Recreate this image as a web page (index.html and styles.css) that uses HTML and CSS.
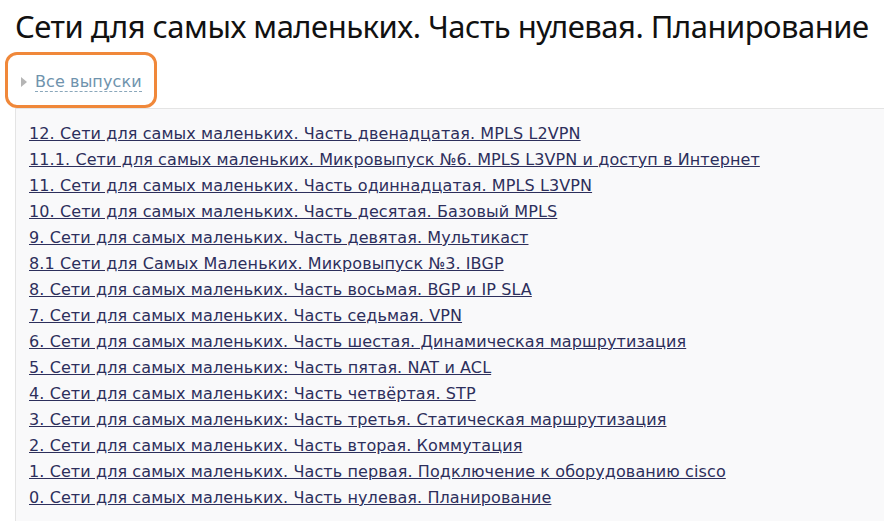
FILE: index.html
```html
<!DOCTYPE html>
<html lang="ru">

<head>
    <meta charset="UTF-8">
    <link rel="stylesheet" href="styles.css">
</head>

<body>
    <h1 class="post-title">Сети для самых маленьких. Часть нулевая. Планирование</h1>

    <!-- выделенный блок со ссылкой на все выпуски -->
    <div class="series-toggle">
        <span class="series-toggle__arrow"></span>
        <a href="#" class="series-toggle__link">Все выпуски</a>
    </div>

    <div class="series-list">
        <a href="#">12. Сети для самых маленьких. Часть двенадцатая. MPLS L2VPN</a>
        <a href="#">11.1. Сети для самых маленьких. Микровыпуск №6. MPLS L3VPN и доступ в Интернет</a>
        <a href="#">11. Сети для самых маленьких. Часть одиннадцатая. MPLS L3VPN</a>
        <a href="#">10. Сети для самых маленьких. Часть десятая. Базовый MPLS</a>
        <a href="#">9. Сети для самых маленьких. Часть девятая. Мультикаст</a>
        <a href="#">8.1 Сети для Самых Маленьких. Микровыпуск №3. IBGP</a>
        <a href="#">8. Сети для самых маленьких. Часть восьмая. BGP и IP SLA</a>
        <a href="#">7. Сети для самых маленьких. Часть седьмая. VPN</a>
        <a href="#">6. Сети для самых маленьких. Часть шестая. Динамическая маршрутизация</a>
        <a href="#">5. Сети для самых маленьких: Часть пятая. NAT и ACL</a>
        <a href="#">4. Сети для самых маленьких: Часть четвёртая. STP</a>
        <a href="#">3. Сети для самых маленьких: Часть третья. Статическая маршрутизация</a>
        <a href="#">2. Сети для самых маленьких. Часть вторая. Коммутация</a>
        <a href="#">1. Сети для самых маленьких. Часть первая. Подключение к оборудованию cisco</a>
        <a href="#">0. Сети для самых маленьких. Часть нулевая. Планирование</a>
    </div>
</body>

</html>
```

FILE: styles.css
```css
/*общие настройки страницы*/
body {
    margin: 0;
    background-color: white;
    font-family: "DejaVu Sans", Verdana, sans-serif;
}

/*заголовок статьи*/
.post-title {
    margin: 0;
    padding: 6px 0 0 15px;
    font-family: "Noto Sans", "Open Sans", sans-serif;
    font-weight: normal;
    font-size: 31px;
    letter-spacing: -0.5px;
    line-height: 40px;
    color: #111;
    white-space: nowrap;
}

/*блок "все выпуски" в оранжевой рамке*/
.series-toggle {
    display: flex;
    align-items: center;
    gap: 8px;
    width: 152px;
    height: 56px;
    margin: 6px 0 0 5px;
    padding: 3px 0 0 13px;
    box-sizing: border-box;
    border: 3px solid #f0883a;
    border-radius: 12px;
}

.series-toggle__arrow {
    width: 0;
    height: 0;
    border-top: 5px solid transparent;
    border-bottom: 5px solid transparent;
    border-left: 6px solid #b5b5b5;
}

.series-toggle__link {
    font-size: 16px;
    letter-spacing: 0.1px;
    color: #6f93ad;
    text-decoration: none;
    border-bottom: 1px dashed #8aa7bb;
}

/*список выпусков*/
.series-list {
    display: flex;
    flex-direction: column;
    align-items: flex-start;
    gap: 7px;
    margin-left: 15px;
    padding: 15px 0 20px 13px;
    background-color: #f9f9fa;
    border-left: 1px solid #e4e4e4;
    border-top: 1px solid #e4e4e4;
}

.series-list a {
    font-size: 16px;
    letter-spacing: 0.1px;
    line-height: 19px;
    color: #2d2f5c;
}
```
